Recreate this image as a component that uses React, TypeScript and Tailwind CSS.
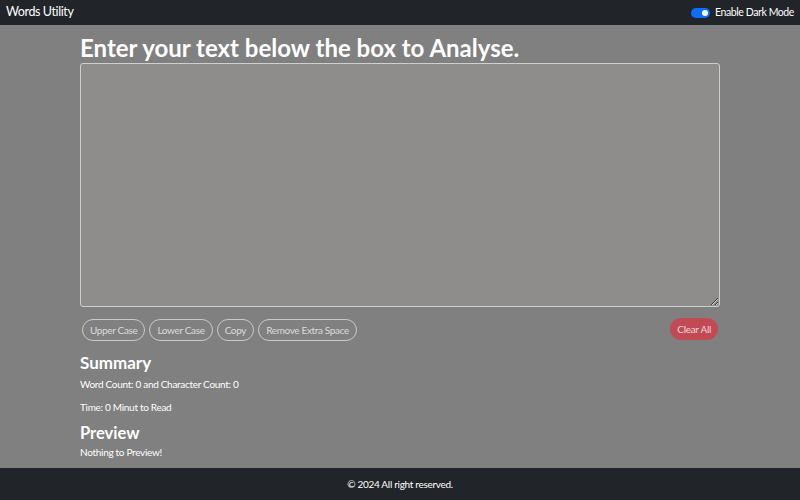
import { useState } from 'react';

export default function App() {
  const [text, setText] = useState('');
  const [dark, setDark] = useState(true);

  const words = text.split(/\s+/).filter((w) => w.length > 0).length;
  const btnCls =
    'rounded-full border border-[#c9c9c9] px-[7px] h-[22px] text-[10px] tracking-[-0.35px] leading-none text-[#dcdcdc] hover:bg-white/10';

  return (
    <div
      className="flex min-h-[500px] flex-col bg-[#808080] text-white"
      style={{ fontFamily: 'Lato, "Open Sans", sans-serif' }}
    >
      {/* Navbar */}
      <nav className="flex h-[25px] items-center justify-between bg-[#212529] pl-[6px] pr-[6px]">
        <span className="text-[12.5px] tracking-[-0.4px] text-white">Words Utility</span>
        <label className="flex items-center gap-[5px] text-[10.5px] tracking-[-0.4px] text-white">
          <button
            type="button"
            onClick={() => setDark(!dark)}
            className={`flex h-[10px] w-[19px] items-center rounded-full px-[2px] ${dark ? 'justify-end bg-[#0d6efd]' : 'justify-start bg-white'}`}
          >
            <span className={`h-[6px] w-[6px] rounded-full ${dark ? 'bg-white' : 'bg-gray-400'}`} />
          </button>
          Enable Dark Mode
        </label>
      </nav>

      {/* Main */}
      <main className="mx-auto flex w-[640px] flex-1 flex-col">
        <h1 className="mt-[7px] text-[24px] font-bold leading-[31px] text-white">
          Enter your text below the box to Analyse.
        </h1>
        <textarea
          value={text}
          onChange={(e) => setText(e.target.value)}
          className="h-[244px] w-full rounded-[3px] border border-[#cfcfcf] bg-[#8f8c8c] p-2 text-sm text-white outline-none"
        />
        <div className="mt-[10px] flex items-center justify-between">
          <div className="ml-[2px] mt-[2px] flex gap-[4px]">
            <button className={btnCls} onClick={() => setText(text.toUpperCase())}>Upper Case</button>
            <button className={btnCls} onClick={() => setText(text.toLowerCase())}>Lower Case</button>
            <button className={btnCls} onClick={() => navigator.clipboard?.writeText(text)}>Copy</button>
            <button className={btnCls} onClick={() => setText(text.split(/[ ]+/).join(' '))}>Remove Extra Space</button>
          </div>
          <button
            onClick={() => setText('')}
            className="mr-[2px] h-[22px] rounded-full bg-[#c24a55] px-[7px] text-[10px] tracking-[-0.3px] leading-none text-[#f1d6d8]"
          >
            Clear All
          </button>
        </div>

        <h2 className="mt-[10px] text-[17px] font-bold leading-[24px] text-white">Summary</h2>
        <p className="mt-[2px] text-[10px] tracking-[-0.3px] leading-[14px] text-white">
          Word Count: {words} and Character Count: {text.length}
        </p>
        <p className="mt-[9px] text-[10px] tracking-[-0.3px] leading-[14px] text-white">
          Time: {0.008 * words} Minut to Read
        </p>
        <h2 className="mt-[7px] text-[16.5px] font-bold leading-[24px] text-white">Preview</h2>
        <p className="text-[10px] tracking-[-0.3px] leading-[14px] text-white">
          {text.length > 0 ? text : 'Nothing to Preview!'}
        </p>
      </main>

      {/* Footer */}
      <footer className="flex h-[32px] items-center justify-center bg-[#212529] text-[10px] tracking-[-0.3px] text-white">
        © 2024 All right reserved.
      </footer>
    </div>
  );
}
